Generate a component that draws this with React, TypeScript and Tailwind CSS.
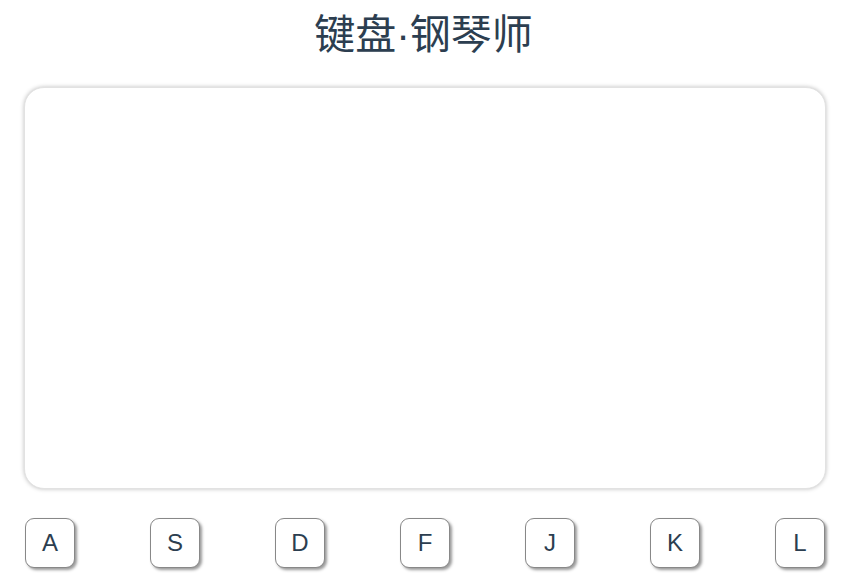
import React from "react";

export default function App() {
  const keys = ["A", "S", "D", "F", "J", "K", "L"];
  return (
    <div
      className="w-[847px] h-[583px] bg-white text-[#2c3e50] overflow-hidden"
      style={{ fontFamily: '"Liberation Sans", "Noto Sans CJK SC", sans-serif' }}
    >
      <h1 className="text-center text-[41px] leading-[46px] pt-[12px] font-normal">键盘·钢琴师</h1>
      <div className="w-[802px] ml-[24px] mt-[29px]">
        <div className="h-[402px] rounded-[20px] border border-[#e2e2e2] shadow-[0_0_4px_rgba(0,0,0,0.25)] bg-white" />
        <div className="flex justify-between mt-[29px] px-[1px]">
          {keys.map((k) => (
            <div
              key={k}
              className="w-[50px] h-[50px] rounded-[9px] border border-[#888] shadow-[2px_2px_3px_#999] flex items-center justify-center text-[24px] bg-white"
            >
              {k}
            </div>
          ))}
        </div>
      </div>
    </div>
  );
}
